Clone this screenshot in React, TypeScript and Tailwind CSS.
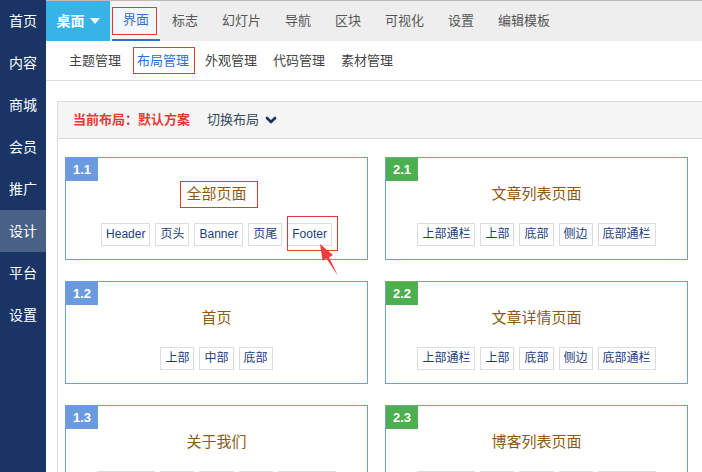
import { ChevronDown } from 'lucide-react'

const sideItems = ['首页', '内容', '商城', '会员', '推广', '设计', '平台', '设置']
const topItems = ['标志', '幻灯片', '导航', '区块', '可视化', '设置', '编辑模板']
const subItems = ['主题管理', '布局管理', '外观管理', '代码管理', '素材管理']

const fullTags = ['上部通栏', '上部', '底部', '侧边', '底部通栏']

const cards = [
  { no: '1.1', title: '全部页面', tags: ['Header', '页头', 'Banner', '页尾', 'Footer'], green: false },
  { no: '2.1', title: '文章列表页面', tags: fullTags, green: true },
  { no: '1.2', title: '首页', tags: ['上部', '中部', '底部'], green: false },
  { no: '2.2', title: '文章详情页面', tags: fullTags, green: true },
  { no: '1.3', title: '关于我们', tags: ['上部通栏', '上部', '中部', '底部', '底部通栏'], green: false },
  { no: '2.3', title: '博客列表页面', tags: fullTags, green: true },
]

export default function App() {
  return (
    <div className="relative w-[702px] h-[472px] flex overflow-hidden bg-white font-[Liberation_Sans,Noto_Sans_CJK_SC,sans-serif]">
      {/* Sidebar */}
      <div className="w-[46px] shrink-0 bg-[#1a3565] flex flex-col">
        {sideItems.map((item) => (
          <div
            key={item}
            className={`h-[42px] flex items-center justify-center text-white text-[14px] ${
              item === '设计' ? 'bg-[#4a6187]' : ''
            }`}
          >
            {item}
          </div>
        ))}
      </div>

      <div className="flex-1 flex flex-col min-w-0">
        {/* Top nav */}
        <div className="h-[41px] shrink-0 bg-[#eeeeee] border-t border-[#bbbbbb] flex items-stretch">
          <div className="w-[64px] bg-[#38b3e6] text-white font-bold text-[14px] flex items-center justify-center gap-[5px]">
            桌面
            <span className="w-0 h-0 border-l-[5px] border-r-[5px] border-t-[6px] border-l-transparent border-r-transparent border-t-white" />
          </div>
          <div className="relative ml-[2px] w-[48px] bg-[#f2f7fd] border-b-2 border-[#2a6fd6] flex items-center justify-center text-[13px] text-[#3a6cc8]">
            界面
            <span className="absolute left-0 top-[6px] w-[45px] h-[28px] border border-[#e53935]" />
          </div>
          {topItems.map((item) => (
            <div key={item} className="px-3 flex items-center text-[13px] text-[#555]">
              {item}
            </div>
          ))}
        </div>

        {/* Sub nav */}
        <div className="h-[40px] shrink-0 bg-white border-b border-[#dddddd] flex items-center pl-[15px]">
          {subItems.map((item) => (
            <div
              key={item}
              className={`relative px-2 text-[13px] ${item === '布局管理' ? 'text-[#2a6fd6]' : 'text-[#444]'}`}
            >
              {item}
              {item === '布局管理' && (
                <span className="absolute left-[4px] right-[2px] -top-[4px] -bottom-[4px] border border-[#e53935]" />
              )}
            </div>
          ))}
        </div>

        {/* Main */}
        <div className="flex-1 pl-[11px] pt-[20px]">
          <div className="w-[700px] h-[500px] border border-[#dddddd]">
            <div className="h-[37px] bg-[#f5f5f5] border-b border-[#dddddd] flex items-center pl-[15px] text-[13px]">
              <span className="font-bold text-[#e53935]">当前布局：默认方案</span>
              <span className="ml-[17px] text-[#34495e]">切换布局</span>
              <ChevronDown className="ml-[4px] w-[16px] h-[16px] text-[#1a3565]" strokeWidth={4} />
            </div>
            <div className="pl-[7px] pt-[18px] grid grid-cols-[303px_303px] gap-x-[17px] gap-y-[21px]">
              {cards.map((card) => (
                <div
                  key={card.no}
                  className="relative h-[103px] border border-[#6d9de6] flex flex-col items-center"
                >
                  <div
                    className={`absolute left-0 top-0 w-[32px] h-[23px] flex items-center justify-center text-white font-bold text-[13px] ${
                      card.green ? 'bg-[#4caf50]' : 'bg-[#6a9be0]'
                    }`}
                  >
                    {card.no}
                  </div>
                  <div className="relative mt-[24px] leading-[24px] text-[15px] text-[#8b5a14]">
                    {card.title}
                    {card.no === '1.1' && (
                      <span className="absolute -left-[6px] -right-[11px] -top-[1px] -bottom-[2px] border border-[#e53935]" />
                    )}
                  </div>
                  <div className="mt-[17px] flex gap-[5px]">
                    {card.tags.map((tag) => (
                      <div
                        key={tag}
                        className="relative h-[23px] px-[4px] border border-[#dddddd] leading-[21px] text-[12px] text-[#23407a]"
                      >
                        {tag}
                        {card.no === '1.1' && tag === 'Footer' && (
                          <span className="absolute -left-[1px] -right-[7px] -top-[8px] -bottom-[6px] border border-[#e53935]" />
                        )}
                      </div>
                    ))}
                  </div>
                </div>
              ))}
            </div>
          </div>
        </div>
      </div>

      {/* Annotation arrow */}
      <svg className="absolute left-[314px] top-[240px]" width="28" height="40" viewBox="0 0 28 40">
        <polygon points="6,4 19,15 15.1,17.2 24,36 12.5,18.6 8.6,20.8" fill="#f03c3c" />
      </svg>
    </div>
  )
}
